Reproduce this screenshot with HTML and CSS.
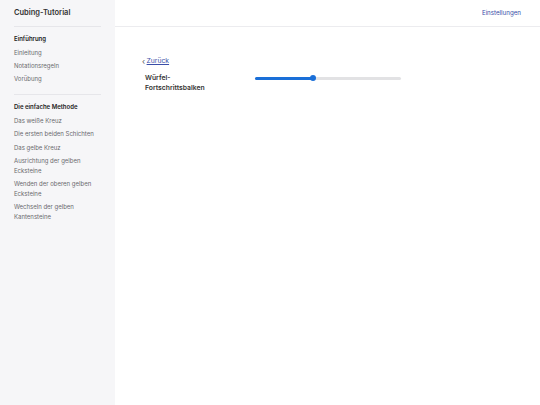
FILE: index.html
```html
<!DOCTYPE html>
<html lang="de">
  <head>
    <meta charset="UTF-8" />
    <meta name="viewport" content="width=device-width, initial-scale=1.0" />
    <title>Cubing-Tutorial</title>
    <link rel="stylesheet" href="styles.css">
  </head>
  <body>
    <div class="layout">
      <!-- Sidebar -->
      <aside class="sidebar">
        <div class="brand">Cubing-Tutorial</div>

        <div class="section">
          <div class="section-title">Einführung</div>
          <a class="nav-link" href="#">Einleitung</a>
          <a class="nav-link" href="#">Notationsregeln</a>
          <a class="nav-link" href="#">Vorübung</a>
        </div>

        <div class="section">
          <div class="section-title">Die einfache Methode</div>
          <a class="nav-link" href="#">Das weiße Kreuz</a>
          <a class="nav-link" href="#">Die ersten beiden Schichten</a>
          <a class="nav-link" href="#">Das gelbe Kreuz</a>
          <a class="nav-link" href="#">Ausrichtung der gelben Ecksteine</a>
          <a class="nav-link" href="#">Wenden der oberen gelben Ecksteine</a>
          <a class="nav-link" href="#">Wechseln der gelben Kantensteine</a>
        </div>
      </aside>

      <!-- Main -->
      <main class="main">
        <header class="topbar">
          <a class="settings" href="#">Einstellungen</a>
        </header>

        <div class="content">
          <a class="back" href="#"><span class="chev">‹</span><span class="back-text">Zurück</span></a>

          <div class="setting-row">
            <div class="setting-label">Würfel-<br>Fortschrittsbalken</div>
            <div class="slider">
              <div class="slider-fill" style="width: 40%"></div>
              <div class="slider-thumb" style="left: 40%"></div>
            </div>
          </div>
        </div>
      </main>
    </div>
  </body>
</html>
```

FILE: styles.css
```css
* {
  box-sizing: border-box;
}

body {
  margin: 0;
  font-family: Inter, "Noto Sans", sans-serif;
  font-size: 6px;
  color: #333;
  background: #fff;
}

a {
  text-decoration: none;
}

.layout {
  display: flex;
  min-height: 405px;
}

.sidebar {
  width: 115px;
  flex-shrink: 0;
  background-color: #f6f6f8;
  padding: 8px 14px 0 14px;
}

.brand {
  font-size: 7.5px;
  font-weight: 600;
  color: #333;
  padding-bottom: 9px;
  border-bottom: 1px solid #e6e6ea;
  width: 87px;
}

.section {
  display: flex;
  flex-direction: column;
  padding: 6px 0 8px;
  border-bottom: 1px solid #e6e6ea;
  width: 87px;
}

.section:last-child {
  border-bottom: none;
}

.section-title {
  font-weight: 600;
  color: #222;
  line-height: 10px;
  padding: 1px 0 2.5px;
}

.nav-link {
  color: #6a6a6e;
  line-height: 10px;
  padding: 1.6px 0;
}

.main {
  flex: 1;
}

.topbar {
  height: 27px;
  border-bottom: 1px solid #ececef;
  display: flex;
  justify-content: flex-end;
  align-items: center;
  padding: 0 19px 1px 0;
}

.settings {
  color: #3a4ea8;
  font-size: 6.2px;
}

.content {
  padding: 29px 0 0 27px;
}

.back {
  color: #3a4ea8;
  display: inline-flex;
  align-items: center;
  gap: 1.5px;
  font-size: 6.8px;
}

.back-text {
  text-decoration: underline;
}

.chev {
  font-size: 8px;
  line-height: 8px;
  color: #555;
}

.setting-row {
  display: flex;
  align-items: flex-start;
  margin-top: 8px;
  padding-left: 3px;
}

.setting-label {
  width: 110px;
  font-weight: 600;
  line-height: 10px;
  color: #333;
  font-size: 6.8px;
}

.slider {
  position: relative;
  width: 146px;
  height: 3px;
  margin-top: 3.5px;
  background-color: #e2e2e4;
  border-radius: 2px;
}

.slider-fill {
  height: 100%;
  background-color: #1a6fd8;
  border-radius: 2px;
}

.slider-thumb {
  position: absolute;
  top: -1.5px;
  width: 6px;
  height: 6px;
  margin-left: -3px;
  border-radius: 50%;
  background-color: #1a6fd8;
}
```
